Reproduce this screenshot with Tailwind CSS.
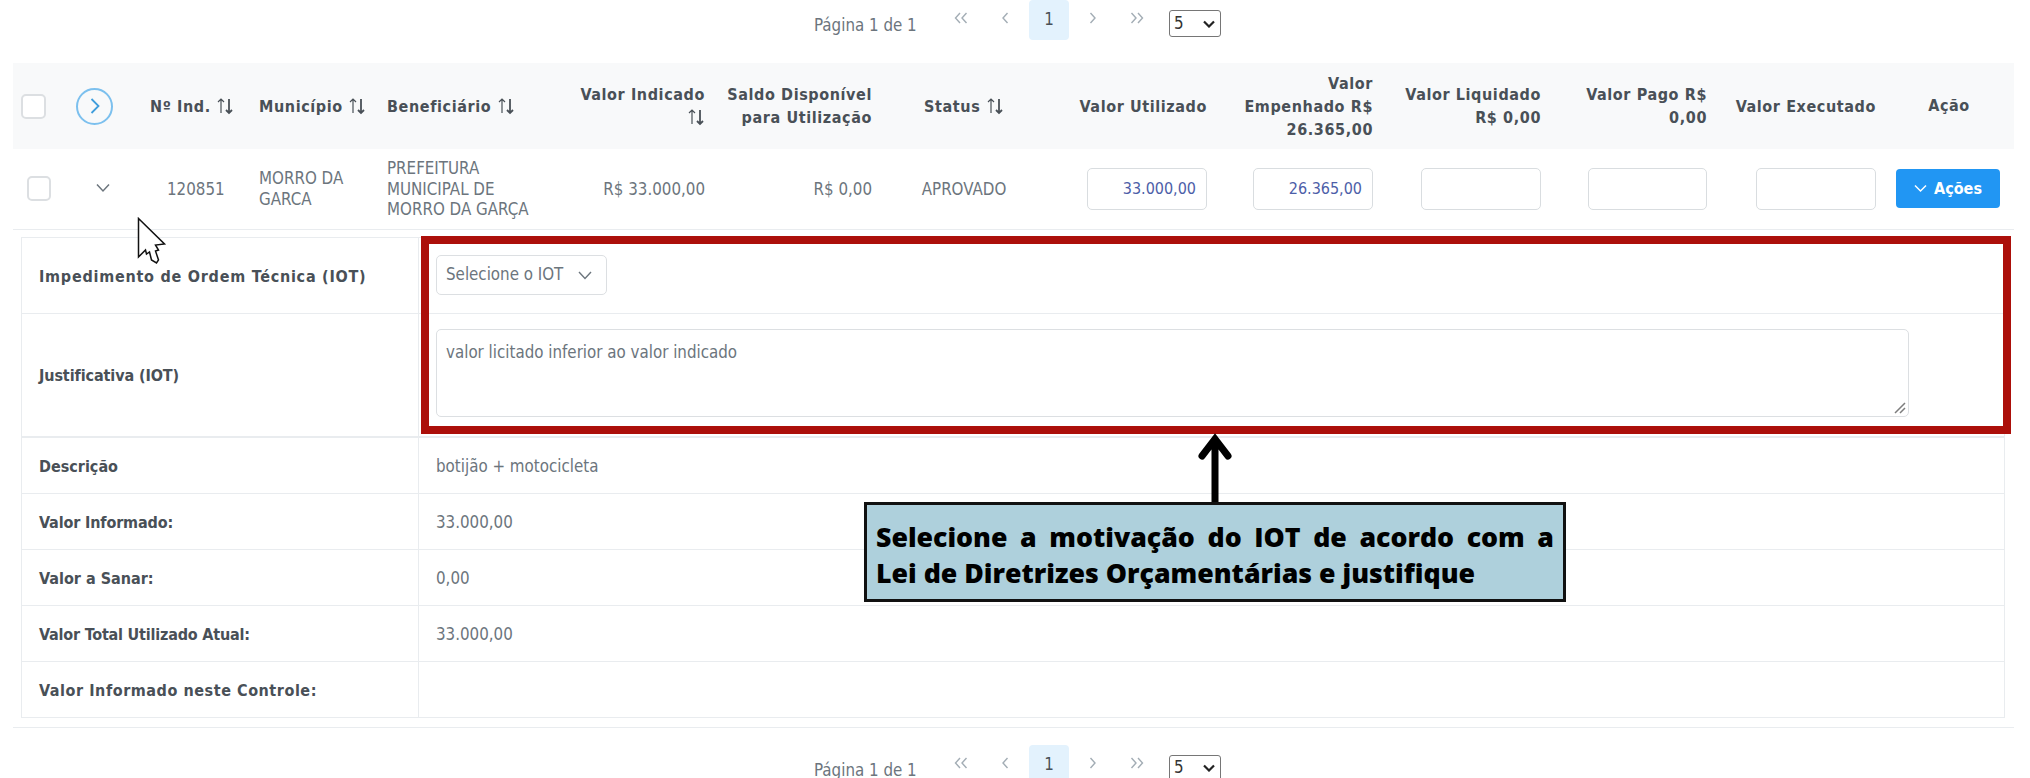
<!DOCTYPE html>
<html lang="pt-BR">
<head>
    <meta charset="UTF-8">
    <title>Controle de Indicações</title>
    <script src="https://cdn.jsdelivr.net/npm/@tailwindcss/browser@4"></script>
</head>
<body class="bg-white text-[#6c757d] font-['DejaVu_Sans_Condensed','DejaVu_Sans',sans-serif] text-[16.800px]">
<div class="relative w-[2030px] h-[778px] overflow-hidden">

    <!-- paginador superior -->
    <div class="flex items-start h-[63px] pl-[814px]">
        <span class="w-[127px] mt-[14px] leading-[22px]">Página 1 de 1</span>
        <div class="flex gap-[4px]">
            <button class="w-[40px] h-[40px] flex items-center justify-center pb-[4px]"><svg width="14" height="12" viewBox="0 0 14 12" fill="none" stroke="#a3adb5" stroke-width="1.4"><path d="M6 1 1.5 6 6 11M12.5 1 8 6l4.500 5"/></svg></button>
            <button class="w-[40px] h-[40px] flex items-center justify-center pb-[4px]"><svg width="8" height="12" viewBox="0 0 8 12" fill="none" stroke="#a3adb5" stroke-width="1.4"><path d="M6.500 1 2 6l4.500 5"/></svg></button>
            <button class="w-[40px] h-[40px] rounded bg-[#e3f2fd] text-[#495057]">1</button>
            <button class="w-[40px] h-[40px] flex items-center justify-center pb-[4px]"><svg width="8" height="12" viewBox="0 0 8 12" fill="none" stroke="#a3adb5" stroke-width="1.4"><path d="M1.500 1 6 6l-4.500 5"/></svg></button>
            <button class="w-[40px] h-[40px] flex items-center justify-center pb-[4px]"><svg width="14" height="12" viewBox="0 0 14 12" fill="none" stroke="#a3adb5" stroke-width="1.4"><path d="M1.500 1 6 6l-4.500 5M8 1l4.500 5L8 11"/></svg></button>
        </div>
        <div class="ml-[12px] mt-[10px] w-[52px] h-[27px] border border-[#767676] rounded-[3px] flex items-center justify-between pl-[4px] pr-[5px] text-[#333] bg-white">
            <span>5</span>
            <svg width="12" height="8" viewBox="0 0 12 8" fill="none" stroke="#222" stroke-width="2.200"><path d="m1 1.500 5 5 5-5"/></svg>
        </div>
    </div>

    <table class="ml-[13px] w-[2001px] table-fixed border-collapse">
        <colgroup>
            <col class="w-[51px]"><col class="w-[66px]"><col class="w-[121px]"><col class="w-[128px]"><col class="w-[191px]"><col class="w-[143px]"><col class="w-[167px]"><col class="w-[168px]"><col class="w-[167px]"><col class="w-[166px]"><col class="w-[168px]"><col class="w-[166px]"><col class="w-[169px]"><col class="w-[130px]">
        </colgroup>
        <thead>
            <tr class="h-[86px] bg-[#f8f9fa] text-[#495057] text-[16px] tracking-[0.6px] font-bold leading-[23px]">
                <th class="pl-[8px] text-left"><div class="w-[25px] h-[25px] rounded-[5px] border-2 border-[#dcdfe2] bg-white"></div></th>
                <th class="text-left pl-[12px]"><div class="w-[37px] h-[37px] rounded-full border-2 border-[#7cc0ee] flex items-center justify-center"><svg width="12" height="18" viewBox="0 0 12 18" fill="none" stroke="#3f9ddc" stroke-width="1.800"><path d="m2.500 2 7 7-7 7"/></svg></div></th>
                <th class="pl-[20px] text-left whitespace-nowrap">Nº Ind. <svg class="inline -mt-[3px]" width="18" height="18" viewBox="0 0 18 18" fill="none"><path d="M5 16V2M2 5l3-3 3 3" stroke="#495057" stroke-width="1.200"/><path d="M13 2v14M10 13l3 3 3-3" stroke="#495057" stroke-width="1.800"/></svg></th>
                <th class="pl-[8px] text-left whitespace-nowrap">Município <svg class="inline -mt-[3px]" width="18" height="18" viewBox="0 0 18 18" fill="none"><path d="M5 16V2M2 5l3-3 3 3" stroke="#495057" stroke-width="1.200"/><path d="M13 2v14M10 13l3 3 3-3" stroke="#495057" stroke-width="1.800"/></svg></th>
                <th class="pl-[8px] text-left whitespace-nowrap">Beneficiário <svg class="inline -mt-[3px]" width="18" height="18" viewBox="0 0 18 18" fill="none"><path d="M5 16V2M2 5l3-3 3 3" stroke="#495057" stroke-width="1.200"/><path d="M13 2v14M10 13l3 3 3-3" stroke="#495057" stroke-width="1.800"/></svg></th>
                <th class="pr-[8px] text-right whitespace-nowrap">Valor Indicado<br><svg class="inline -mt-[3px]" width="18" height="18" viewBox="0 0 18 18" fill="none"><path d="M5 16V2M2 5l3-3 3 3" stroke="#495057" stroke-width="1.200"/><path d="M13 2v14M10 13l3 3 3-3" stroke="#495057" stroke-width="1.800"/></svg></th>
                <th class="pr-[8px] text-right whitespace-nowrap">Saldo Disponível<br>para Utilização</th>
                <th class="text-center whitespace-nowrap">Status <svg class="inline -mt-[3px]" width="18" height="18" viewBox="0 0 18 18" fill="none"><path d="M5 16V2M2 5l3-3 3 3" stroke="#495057" stroke-width="1.200"/><path d="M13 2v14M10 13l3 3 3-3" stroke="#495057" stroke-width="1.800"/></svg></th>
                <th class="pr-[8px] text-right whitespace-nowrap">Valor Utilizado</th>
                <th class="pr-[8px] text-right whitespace-nowrap">Valor<br>Empenhado R$<br>26.365,00</th>
                <th class="pr-[8px] text-right whitespace-nowrap">Valor Liquidado<br>R$ 0,00</th>
                <th class="pr-[8px] text-right whitespace-nowrap">Valor Pago R$<br>0,00</th>
                <th class="pr-[8px] text-right whitespace-nowrap">Valor Executado</th>
                <th class="text-center pb-[2px]">Ação</th>
            </tr>
        </thead>
        <tbody>
            <tr class="h-[80px] border-b border-[#e9ecef] leading-[20.500px]">
                <td class="pl-[14px]"><div class="w-[24px] h-[25px] rounded-[5px] border-2 border-[#dcdfe2] bg-white"></div></td>
                <td class="pl-[32px]"><svg class="-mt-[2px]" width="14" height="10" viewBox="0 0 14 10" fill="none" stroke="#6c757d" stroke-width="1.500"><path d="m1 1.500 6 6.500 6-6.500"/></svg></td>
                <td class="pl-[37px]">120851</td>
                <td class="pl-[8px]">MORRO DA<br>GARCA</td>
                <td class="pl-[8px]">PREFEITURA<br>MUNICIPAL DE<br>MORRO DA GARÇA</td>
                <td class="pr-[8px] text-right">R$ 33.000,00</td>
                <td class="pr-[8px] text-right">R$ 0,00</td>
                <td class="text-center">APROVADO</td>
                <td class="pr-[8px]"><input value="33.000,00" class="block ml-auto w-[120px] h-[42px] px-[10px] text-[16px] text-right text-[#4c5ea8] border border-[#d9dde0] rounded-[5px]"></td>
                <td class="pr-[8px]"><input value="26.365,00" class="block ml-auto w-[120px] h-[42px] px-[10px] text-[16px] text-right text-[#4c5ea8] border border-[#d9dde0] rounded-[5px]"></td>
                <td class="pr-[8px]"><input class="block ml-auto w-[120px] h-[42px] border border-[#d9dde0] rounded-[5px]"></td>
                <td class="pr-[8px]"><input class="block ml-auto w-[119px] h-[42px] border border-[#d9dde0] rounded-[5px]"></td>
                <td class="pr-[8px]"><input class="block ml-auto w-[120px] h-[42px] border border-[#d9dde0] rounded-[5px]"></td>
                <td class="pl-[12px]"><button class="w-[104px] h-[39px] rounded-[4px] bg-[#2196f3] text-white text-[16px] font-bold flex items-center justify-center gap-[7px]"><svg width="13" height="9" viewBox="0 0 13 9" fill="none" stroke="#fff" stroke-width="1.500"><path d="m1 1.500 5.500 5.500L12 1.500"/></svg>Ações</button></td>
            </tr>
            <tr class="border-b border-[#e9ecef]">
                <td colspan="14" class="pl-[8px] pr-[9px] pt-[7px] pb-[9px]">
                    <table class="w-[1984px] table-fixed border-collapse">
                        <colgroup><col class="w-[397px]"><col></colgroup>
                        <tbody>
                            <tr class="h-[76px]">
                                <th class="border border-[#e9ecef] pl-[17px] pt-[3px] text-left text-[16px] tracking-[0.750px] text-[#495057] font-bold">Impedimento de Ordem Técnica (IOT)</th>
                                <td class="border border-[#e9ecef] pl-[17px]"><button class="w-[171px] h-[40px] pl-[9px] pr-[14px] border border-[#dcdfe2] rounded-[5px] flex items-center justify-between bg-white"><span>Selecione o IOT</span><svg width="14" height="9" viewBox="0 0 14 9" fill="none" stroke="#6c757d" stroke-width="1.400"><path d="m1 1 6 6.500L13 1"/></svg></button></td>
                            </tr>
                            <tr class="h-[124px] border-b-2 border-[#e4e7ea]">
                                <th class="border border-b-2 border-[#e9ecef] pl-[17px] pt-[3px] text-left text-[16px] tracking-[-0.100px] text-[#495057] font-bold">Justificativa (IOT)</th>
                                <td class="border border-b-2 border-[#e9ecef] pl-[17px]">
                                    <div class="relative w-[1473px] -mt-[3px]">
                                        <textarea class="block w-full h-[88px] pl-[9px] pt-[11px] leading-[22px] resize-none border border-[#dcdfe2] rounded-[5px]">valor licitado inferior ao valor indicado</textarea>
                                        <svg class="absolute right-[3px] bottom-[3px]" width="12" height="12" viewBox="0 0 12 12" fill="none" stroke="#7d7d7d" stroke-width="1.500"><path d="M1 11 11 1M6 11l5-5"/></svg>
                                    </div>
                                </td>
                            </tr>
                            <tr class="h-[56px]">
                                <th class="border border-[#e9ecef] pl-[17px] pt-[3px] text-left text-[16px] text-[#495057] font-bold">Descrição</th>
                                <td class="border border-[#e9ecef] pl-[17px] pt-[3px]">botijão + motocicleta</td>
                            </tr>
                            <tr class="h-[56px]">
                                <th class="border border-[#e9ecef] pl-[17px] pt-[3px] text-left text-[16px] tracking-[-0.150px] text-[#495057] font-bold">Valor Informado:</th>
                                <td class="border border-[#e9ecef] pl-[17px] pt-[3px]">33.000,00</td>
                            </tr>
                            <tr class="h-[56px]">
                                <th class="border border-[#e9ecef] pl-[17px] pt-[3px] text-left text-[16px] text-[#495057] font-bold">Valor a Sanar:</th>
                                <td class="border border-[#e9ecef] pl-[17px] pt-[3px]">0,00</td>
                            </tr>
                            <tr class="h-[56px]">
                                <th class="border border-[#e9ecef] pl-[17px] pt-[3px] text-left text-[16px] tracking-[-0.200px] text-[#495057] font-bold">Valor Total Utilizado Atual:</th>
                                <td class="border border-[#e9ecef] pl-[17px] pt-[3px]">33.000,00</td>
                            </tr>
                            <tr class="h-[56px]">
                                <th class="border border-[#e9ecef] pl-[17px] pt-[3px] text-left text-[16px] tracking-[0.550px] text-[#495057] font-bold">Valor Informado neste Controle:</th>
                                <td class="border border-[#e9ecef] pl-[17px]"></td>
                            </tr>
                        </tbody>
                    </table>
                </td>
            </tr>
        </tbody>
    </table>

    <!-- paginador inferior -->
    <div class="flex items-start h-[63px] pl-[814px] mt-[17px]">
        <span class="w-[127px] mt-[14px] leading-[22px]">Página 1 de 1</span>
        <div class="flex gap-[4px]">
            <button class="w-[40px] h-[40px] flex items-center justify-center pb-[4px]"><svg width="14" height="12" viewBox="0 0 14 12" fill="none" stroke="#a3adb5" stroke-width="1.4"><path d="M6 1 1.5 6 6 11M12.5 1 8 6l4.500 5"/></svg></button>
            <button class="w-[40px] h-[40px] flex items-center justify-center pb-[4px]"><svg width="8" height="12" viewBox="0 0 8 12" fill="none" stroke="#a3adb5" stroke-width="1.4"><path d="M6.500 1 2 6l4.500 5"/></svg></button>
            <button class="w-[40px] h-[40px] rounded bg-[#e3f2fd] text-[#495057]">1</button>
            <button class="w-[40px] h-[40px] flex items-center justify-center pb-[4px]"><svg width="8" height="12" viewBox="0 0 8 12" fill="none" stroke="#a3adb5" stroke-width="1.4"><path d="M1.500 1 6 6l-4.500 5"/></svg></button>
            <button class="w-[40px] h-[40px] flex items-center justify-center pb-[4px]"><svg width="14" height="12" viewBox="0 0 14 12" fill="none" stroke="#a3adb5" stroke-width="1.4"><path d="M1.500 1 6 6l-4.500 5M8 1l4.500 5L8 11"/></svg></button>
        </div>
        <div class="ml-[12px] mt-[10px] w-[52px] h-[27px] border border-[#767676] rounded-[3px] flex items-center justify-between pl-[4px] pr-[5px] text-[#333] bg-white">
            <span>5</span>
            <svg width="12" height="8" viewBox="0 0 12 8" fill="none" stroke="#222" stroke-width="2.200"><path d="m1 1.500 5 5 5-5"/></svg>
        </div>
    </div>

    <!-- anotações sobre a captura -->
    <div class="absolute left-[421px] top-[236px] w-[1590px] h-[198px] border-[8px] border-[#ac0f0a]"></div>
    <svg class="absolute left-[1197px] top-[433px]" width="36" height="70" viewBox="0 0 36 70" fill="none" stroke="#000" stroke-width="7" stroke-linecap="round"><path d="M18 6v64M5 23 18 6l13 17"/></svg>
    <div class="absolute left-[864px] top-[502px] w-[702px] h-[100px] border-[3px] border-[#111] bg-[#aed0dc] pl-[9px] pr-[9px] pt-[14px] font-['Open_Sans',sans-serif] font-extrabold text-[26.700px] leading-[36px] text-black">
        <p class="[text-align-last:justify]">Selecione a motivação do IOT de acordo com a</p>
        <p>Lei de Diretrizes Orçamentárias e justifique</p>
    </div>
    <svg class="absolute left-[137px] top-[217px]" width="31" height="48" viewBox="0 0 31 48" fill="#fff" stroke="#111" stroke-width="1.500"><path d="M1.500 1.500V40l7-7 1 4 3-2 2 8 5 3 2-3-3-9 3-1-3-5 9-1z"/></svg>
</div>
</body>
</html>
